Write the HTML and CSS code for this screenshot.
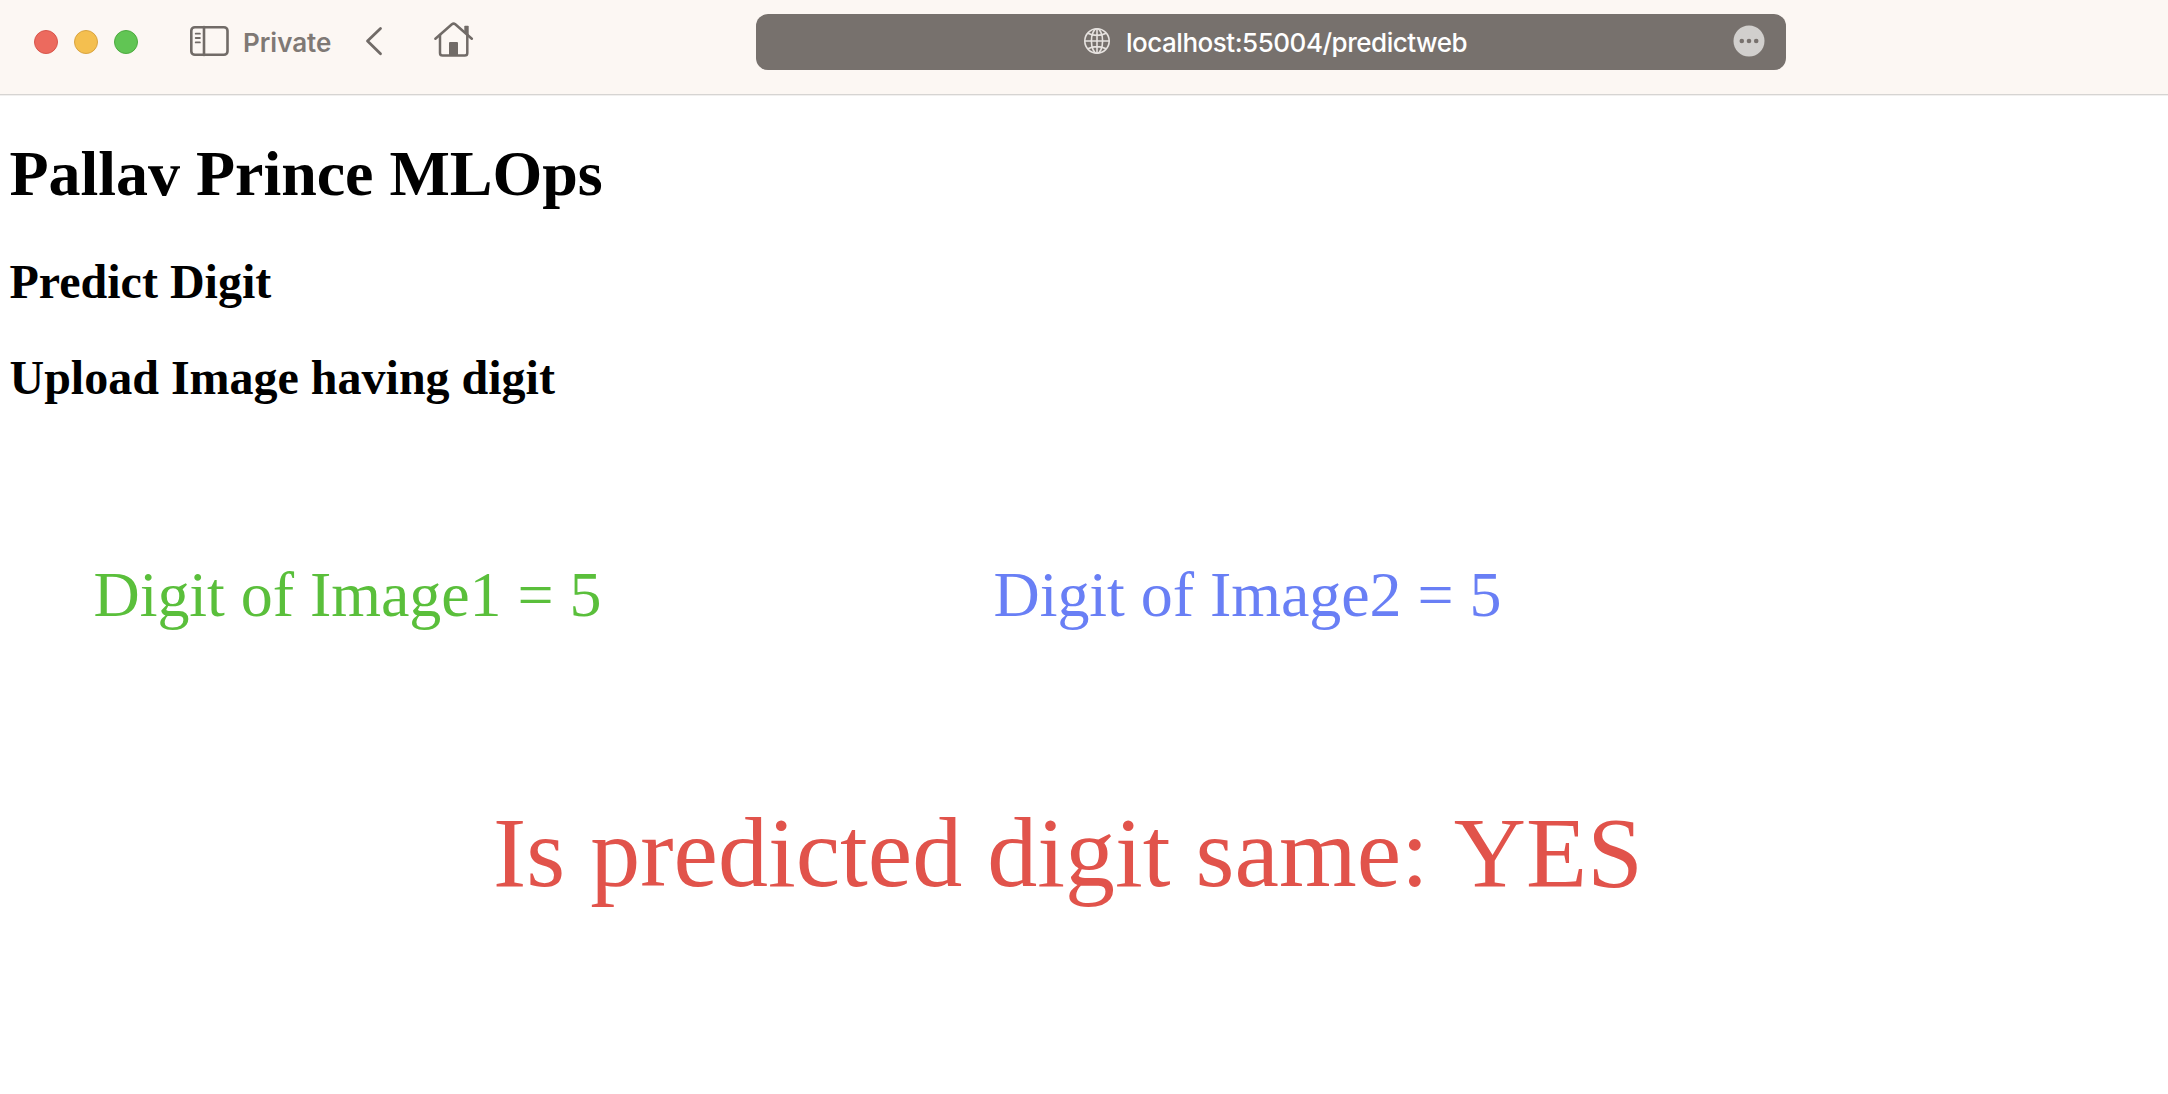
FILE: index.html
```html
<!DOCTYPE html>
<html lang="en">
<head>
<meta charset="utf-8">
<title>Pallav Prince MLOps</title>
<link rel="stylesheet" href="styles.css">
</head>
<body>
<header class="toolbar">
  <div class="lights"><span class="light red"></span><span class="light yellow"></span><span class="light green"></span></div>
  <svg class="sidebar-icon" width="40" height="32" viewBox="0 0 40 32" fill="none" stroke="#716b67" stroke-width="2.6" stroke-linecap="round"><rect x="2.3" y="2.2" width="36.2" height="27.6" rx="3.6"/><path d="M15 2V30"/><path stroke-width="1.8" d="M6.7 8.7H10.9M6.7 13H10.9M6.7 17.4H10.9"/></svg>
  <span class="private">Private</span>
  <svg class="back-icon" width="18" height="32" viewBox="0 0 18 32" fill="none" stroke="#716b67" stroke-width="2.8" stroke-linecap="round" stroke-linejoin="round"><path d="M15.5 3.5L2.5 16L15.5 28.8"/></svg>
  <svg class="home-icon" width="40" height="36" viewBox="0 0 40 36" fill="none" stroke="#716b67" stroke-width="2.5" stroke-linecap="round" stroke-linejoin="round"><path d="M1.4 17.7L17.9 3.3Q19.6 2 21.3 3.3L37.8 17.7"/><path d="M6 14V32Q6 34.6 8.6 34.6H30.7Q33.3 34.6 33.3 32V14"/><path d="M30.3 5.6Q30.3 4.8 31.1 4.8H33.9Q34.7 4.8 34.7 5.6V15L30.3 11.2Z" fill="#716b67" stroke="none"/><path d="M15 35V22Q15 21 16 21H23Q24 21 24 22V35Z" fill="#716b67" stroke="none"/></svg>
  <div class="address">
    <svg class="globe-icon" width="28" height="28" viewBox="0 0 28 28" fill="none" stroke="#e6e2df" stroke-width="1.6"><circle cx="14" cy="14" r="12.2"/><ellipse cx="14" cy="14" rx="5.6" ry="12.2"/><path d="M14 1.8V26.2M1.8 14H26.2M4.8 6.2Q14 10.6 23.2 6.2M4.8 21.8Q14 17.4 23.2 21.8"/></svg>
    <span class="url">localhost:55004/predictweb</span>
    <svg class="more-icon" width="32" height="32" viewBox="0 0 32 32"><circle cx="16" cy="16" r="15.5" fill="#d1cfcd"/><g fill="#77716d"><circle cx="8.8" cy="16" r="2.3"/><circle cx="16" cy="16" r="2.3"/><circle cx="23.2" cy="16" r="2.3"/></g></svg>
  </div>
</header>
<main class="page">
  <h1 class="title">Pallav Prince MLOps</h1>
  <h2 class="subtitle">Predict Digit</h2>
  <h2 class="subtitle">Upload Image having digit</h2>
  <div class="results">
    <div class="digit first">Digit of Image1 = 5</div>
    <div class="digit second">Digit of Image2 = 5</div>
  </div>
  <div class="verdict">Is predicted digit same: YES</div>
</main>
</body>
</html>
```

FILE: styles.css
```css
* { box-sizing: border-box; }
body { margin: 0; background: #fff; color: #000; font-family: "Liberation Serif", "Times New Roman", serif; }
.toolbar { display: flex; align-items: flex-start; height: 95px; background: #fcf7f3; border-bottom: 1px solid #d6d4d2; box-shadow: 0 1px 0 #f1f0ef; padding-left: 34px; font-family: Inter, sans-serif; }
.lights { display: flex; gap: 16px; margin-top: 30px; }
.light { width: 24px; height: 24px; border-radius: 50%; border: 1px solid; }
.red { background: #ec6a5e; border-color: #d8564c; }
.yellow { background: #f4bf4f; border-color: #d9a441; }
.green { background: #61c554; border-color: #4dab40; }
.sidebar-icon { margin: 25px 0 0 51px; }
.private { width: 90px; margin: 27px 0 0 14px; font-size: 26px; line-height: 32px; font-weight: 600; letter-spacing: 0; color: #7f7975; white-space: nowrap; }
.back-icon { margin: 25px 0 0 32px; }
.home-icon { margin: 21px 0 0 51px; }
.address { display: flex; align-items: center; width: 1030px; height: 56px; margin: 14px 0 0 282px; padding: 0 21px 0 327px; border-radius: 12px; background: #77716d; }
.globe-icon { margin-top: -2px; }
.url { margin: 2px 0 0 15px; font-size: 26px; line-height: 32px; font-weight: 500; letter-spacing: -0.48px; color: #fff; white-space: nowrap; }
.more-icon { margin: -3px 0 0 auto; }
.page { padding: 43px 9.5px 0; }
.title { margin: 0 0 44px; font-size: 64px; line-height: 72px; letter-spacing: -0.03px; }
.subtitle { margin: 0 0 40px; font-size: 48px; line-height: 56px; }
.results { display: grid; grid-template-columns: 900px 1fr; margin: 153px 0 166px; padding-left: 84px; }
.digit { font-size: 64px; line-height: 72px; letter-spacing: -0.05px; white-space: nowrap; }
.first { color: #5abf3b; }
.second { color: #697ff5; }
.verdict { padding-left: 483.5px; font-size: 100px; line-height: 112px; color: #e1534b; font-kerning: none; white-space: nowrap; }
```
